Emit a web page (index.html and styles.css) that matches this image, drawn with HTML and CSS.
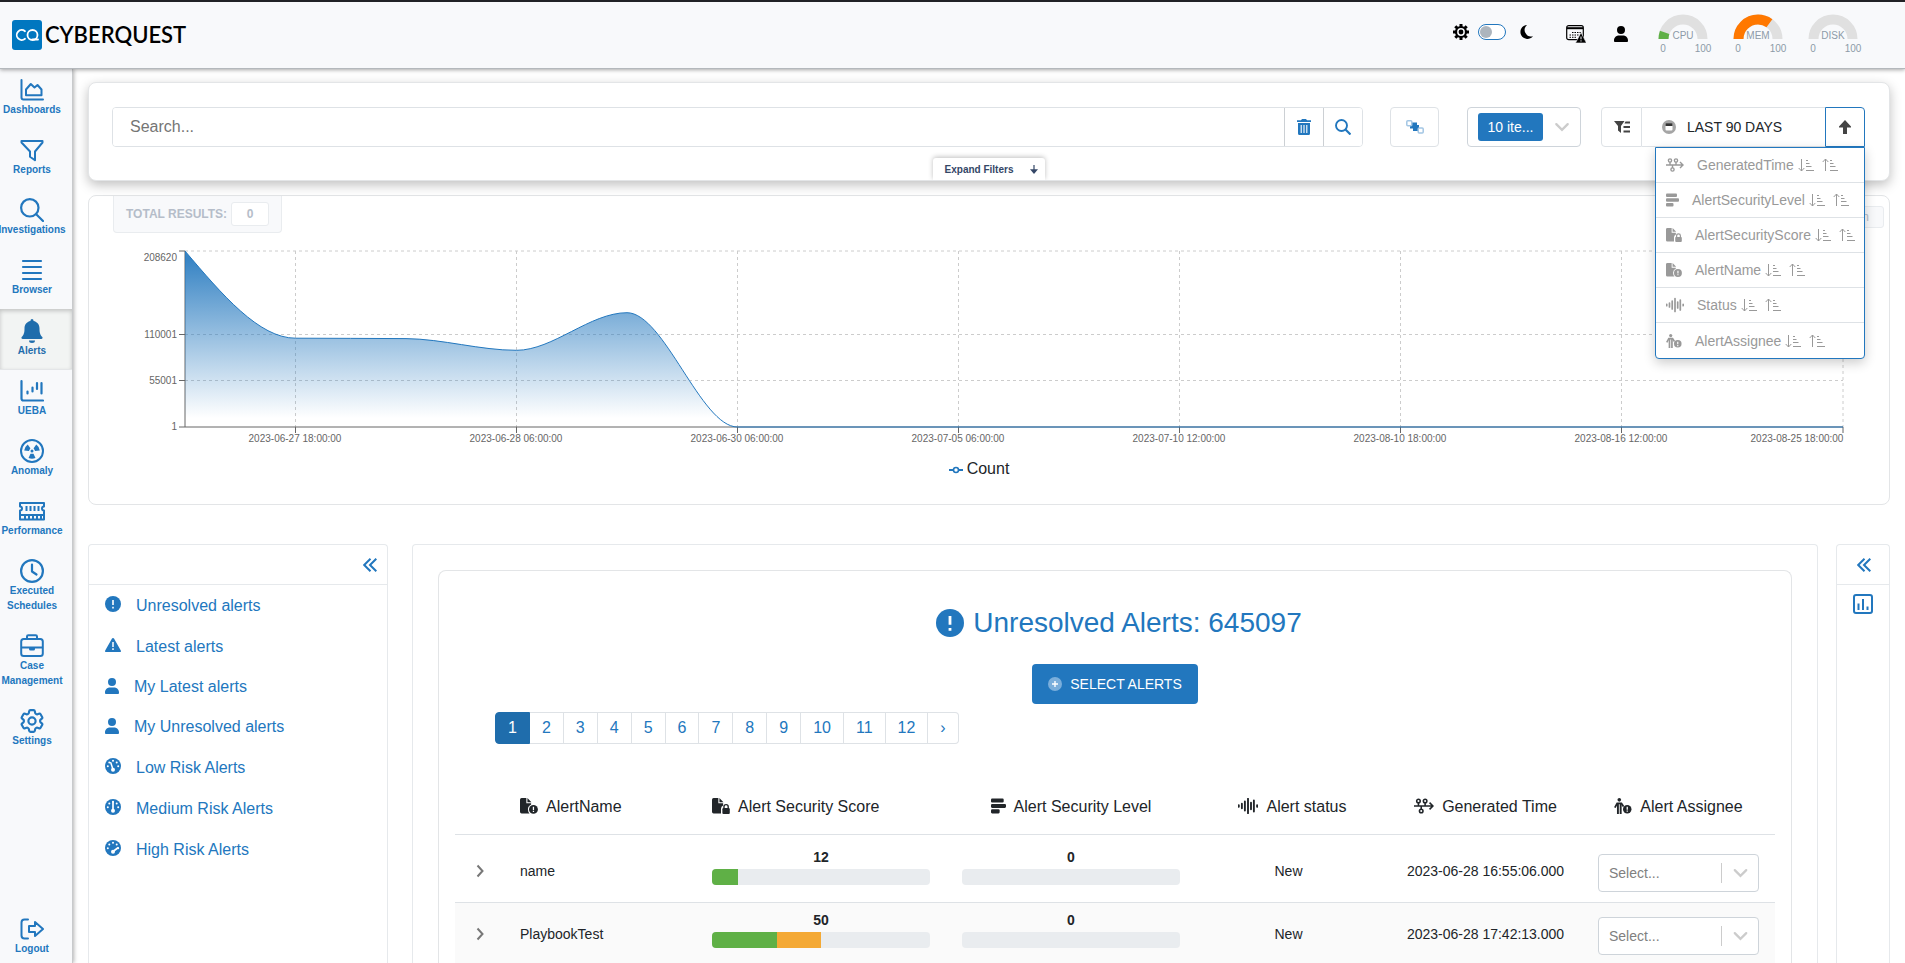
FILE: index.html
```html
<!DOCTYPE html>
<html lang="en">
<head>
    <meta charset="UTF-8">
    <meta name="viewport" content="width=device-width, initial-scale=1.0">
    <title>CYBERQUEST - Alerts</title>
    <link rel="stylesheet" href="styles.css">
</head>
<body>
    <!-- icon sprite -->
    <svg class="sprite" aria-hidden="true">
        <symbol id="i-dashboards" viewBox="0 0 24 24"><g fill="none" stroke="currentColor" stroke-width="2" stroke-linecap="round" stroke-linejoin="round"><path d="M1.5 2v17.500q0 2 2 2H23"/><path d="M6 11.500 10.800 6l3.700 3.500 3-2.500 4 4.500V17.300H6z"/></g></symbol>
        <symbol id="i-filter" viewBox="0 0 24 24"><path d="M1.500 3h21v1.500L15 13.500V22.300l-5-3.500v-5.300L1.500 4.500z" fill="none" stroke="currentColor" stroke-width="2" stroke-linejoin="round"/></symbol>
        <symbol id="i-search" viewBox="0 0 24 24"><g fill="none" stroke="currentColor" stroke-width="2.200" stroke-linecap="round"><circle cx="9.800" cy="9.800" r="8.700"/><path d="M16.200 16.200 23 23"/></g></symbol>
        <symbol id="i-find" viewBox="0 0 16 16"><g fill="none" stroke="currentColor" stroke-width="1.900"><circle cx="6.500" cy="6.500" r="5.500"/><path d="M10.500 10.500 15.500 15.500" stroke-width="2.200"/></g></symbol>
        <symbol id="i-list" viewBox="0 0 24 24"><path d="M3 3h18M3 9h18M3 15h18M3 21h18" stroke="currentColor" stroke-width="2.200" stroke-linecap="round"/></symbol>
        <symbol id="i-bell" viewBox="0 0 24 24"><path d="M10.500 1.500a1.500 1.500 0 0 1 3 0v.6c3.700.7 6 3.700 6 7.400 0 5 1 6.500 2.600 8.300 1 1.200.4 2.200-.9 2.200H2.800c-1.300 0-1.900-1-.9-2.200C3.500 16 4.500 14.500 4.500 9.500c0-3.700 2.300-6.700 6-7.400zM9 21.500h6a3 2.500 0 0 1-6 0z" fill="currentColor"/></symbol>
        <symbol id="i-ueba" viewBox="0 0 24 24"><path d="M1.500 2v17.500q0 2 2 2H23M7.500 12.500v2M12.500 8.500v4M17 4v6M21.500 4v10.500" fill="none" stroke="currentColor" stroke-width="2.200" stroke-linecap="round"/></symbol>
        <symbol id="i-anomaly" viewBox="0 0 24 24"><circle cx="12" cy="12" r="11" fill="none" stroke="currentColor" stroke-width="2"/><g fill="currentColor"><circle cx="12" cy="12" r="1.500"/><path id="blade" d="M10.500 14.700h3l2 4.300q-3.500 1.500-7 0z"/><use href="#blade" transform="rotate(120 12 12)"/><use href="#blade" transform="rotate(240 12 12)"/></g></symbol>
        <symbol id="i-memory" viewBox="0 0 28 24"><g fill="none" stroke="currentColor" stroke-width="2"><path d="M2 4h24v3.500a2 2 0 0 0 0 4V20.500H2v-9a2 2 0 0 0 0-4z" stroke-linejoin="round"/><path d="M2 16h24M8.500 7v5M12.500 7v5M16.500 7v5M20.500 7v5M7 17v3M11 17v3M15 17v3M19 17v3M23 17v3"/></g></symbol>
        <symbol id="i-clock" viewBox="0 0 24 24"><g fill="none" stroke="currentColor" stroke-width="2.200" stroke-linecap="round" stroke-linejoin="round"><circle cx="12" cy="12" r="10.900"/><path d="M12 5.500V12.500l4.500 3"/></g></symbol>
        <symbol id="i-case" viewBox="0 0 24 24"><g fill="none" stroke="currentColor" stroke-width="2" stroke-linejoin="round"><rect x="1.200" y="5" width="21.600" height="17" rx="2.500"/><path d="M7 5V2.500q0-1.300 1.300-1.300h7.400q1.300 0 1.300 1.300V5M1.200 13.500h21.600"/></g><path d="M9 13.500h6v1.500q0 1.500-1.500 1.500h-3Q9 16.500 9 15z" fill="currentColor"/></symbol>
        <symbol id="i-gear" viewBox="2 2 20 20"><g fill="none" stroke="currentColor" stroke-width="1.800" stroke-linejoin="round"><path d="M9.594 3.940c.09-.542.56-.94 1.110-.94h2.593c.55 0 1.020.398 1.110.94l.213 1.281c.063.374.313.686.645.870.074.040.147.083.220.127.325.196.720.257 1.075.124l1.217-.456a1.125 1.125 0 0 1 1.370.490l1.296 2.247a1.125 1.125 0 0 1-.26 1.431l-1.003.827c-.293.241-.438.613-.43.992a7.723 7.723 0 0 1 0 .255c-.008.378.137.750.430.991l1.004.827c.424.350.534.955.260 1.430l-1.298 2.247a1.125 1.125 0 0 1-1.369.491l-1.217-.456c-.355-.133-.75-.072-1.076.124a6.470 6.470 0 0 1-.22.128c-.331.183-.581.495-.644.869l-.213 1.281c-.09.543-.56.940-1.110.940h-2.594c-.55 0-1.019-.398-1.110-.94l-.213-1.281c-.062-.374-.312-.686-.644-.87a6.520 6.520 0 0 1-.22-.127c-.325-.196-.72-.257-1.076-.124l-1.217.456a1.125 1.125 0 0 1-1.369-.49l-1.297-2.247a1.125 1.125 0 0 1 .260-1.431l1.004-.827c.292-.24.437-.613.430-.991a6.932 6.932 0 0 1 0-.255c.007-.38-.138-.751-.43-.992l-1.004-.827a1.125 1.125 0 0 1-.26-1.430l1.297-2.247a1.125 1.125 0 0 1 1.370-.491l1.216.456c.356.133.751.072 1.076-.124.072-.044.146-.086.220-.128.332-.183.582-.495.644-.869z"/><circle cx="12" cy="12" r="3"/></g></symbol>
        <symbol id="i-logout" viewBox="0 0 24 24"><g fill="none" stroke="currentColor" stroke-width="2" stroke-linecap="round" stroke-linejoin="round"><path d="M8 2.500H4.500q-3 0-3 3v13q0 3 3 3H8"/><path d="M9 9h6V5l8 7-8 7v-4H9z"/></g></symbol>

        <symbol id="i-sun" viewBox="0 0 16 16"><g fill="none" stroke="currentColor"><circle cx="8" cy="8" r="5" stroke-width="2.200"/><path d="M8 0v3M8 13v3M0 8h3M13 8h3M2.300 2.300l2 2M11.700 11.700l2 2M13.700 2.300l-2 2M4.300 11.700l-2 2" stroke-width="3"/></g><circle cx="8" cy="8" r="2.400" fill="currentColor"/></symbol>
        <symbol id="i-moon" viewBox="0 0 16 16"><path d="M8 1a7 7 0 1 0 6 11.200A6.500 6.500 0 0 1 8 1z" fill="currentColor"/></symbol>
        <symbol id="i-schedule" viewBox="0 0 20 18"><rect x=".7" y=".7" width="16.600" height="14" rx="2" fill="none" stroke="currentColor" stroke-width="1.200"/><path d="M1 3.200h16" stroke="currentColor" stroke-width="2"/><path d="M6 7.500h9M3.500 10h9M3.500 12.300h7" stroke="currentColor" stroke-dasharray="1.500 1"/><path d="M15 7.500 20.500 18h-11z" fill="currentColor" stroke="#f8f9fb" stroke-width=".6"/><path d="M15 11.500v2.800M15 15.300v1.200" stroke="#f8f9fb"/></symbol>
        <symbol id="i-user" viewBox="0 0 14 16"><path d="M7 0a4 4 0 1 1 0 8 4 4 0 0 1 0-8zM5 9.500h4c3 0 5 2.200 5 5 0 1-.4 1.500-1.200 1.500H1.200C.4 16 0 15.500 0 14.500c0-2.800 2-5 5-5z" fill="currentColor"/></symbol>

        <symbol id="i-trash" viewBox="0 0 14 16"><path d="M0 1.200h4L5 0h4l1 1.200h4V3H0zM1 4h12v10.500q0 1.500-1.500 1.500h-9Q1 16 1 14.500z" fill="currentColor"/><path d="M4.200 6v8M7 6v8M9.800 6v8" stroke="#fff" stroke-width="1.100"/></symbol>
        <symbol id="i-nodes" viewBox="0 0 18 14"><path d="M4 2.500h7V5h2v6H7V8.500H4z" fill="#2277be"/><g fill="#fff" stroke="#a3c6e4" stroke-width="1.500"><rect x=".8" y=".8" width="5" height="5" rx="1"/><rect x="12.200" y="8" width="5" height="5" rx="1"/></g></symbol>
        <symbol id="i-chevron-down" viewBox="0 0 14 14"><path d="M2 4.500l5 5 5-5" fill="none" stroke="currentColor" stroke-width="2" stroke-linecap="round"/></symbol>
        <symbol id="i-filter-list" viewBox="0 0 16 12"><path d="M0 0h10.500L7 5v7L4 9.500V5zM11.500.5H16v2h-5.500zM9.500 5H16v2H9.500zM9.500 9.500H16v2H9.500z" fill="currentColor"/></symbol>
        <symbol id="i-period" viewBox="0 0 14 14"><circle cx="7" cy="7" r="7" fill="#a5a5a5"/><rect x="3.500" y="3.500" width="7" height="7" rx="1" fill="#fff"/><path d="M3.500 6V4q0-.8.8-.8h5.400q.8 0 .8.800V6z" fill="#333"/></symbol>
        <symbol id="i-arrow-up" viewBox="0 0 12 14"><path d="M6 0l6 6.500v1H8V14H4V7.500H0v-1z" fill="currentColor"/></symbol>
        <symbol id="i-arrow-down" viewBox="0 0 8 9"><path d="M4 0v5" stroke="currentColor" opacity=".6" stroke-width="2"/><path d="M0 4.300h8L4 9z" fill="currentColor"/></symbol>

        <symbol id="i-time" viewBox="0 0 18 14"><g fill="none" stroke="currentColor" stroke-width="1.400"><circle cx="4" cy="2.500" r="1.600"/><circle cx="10" cy="2.500" r="1.600"/><circle cx="6.500" cy="11.500" r="1.600"/><path d="M0 7h17M14 4l3 3-3 3M4 4v3M10 4v3M6.500 7v3"/></g></symbol>
        <symbol id="i-level" viewBox="0 0 13 13"><g fill="currentColor"><rect width="11" height="3.500" rx="1"/><rect y="4.700" width="13" height="3.500" rx="1"/><rect y="9.400" width="7.500" height="3.500" rx="1"/></g></symbol>
        <symbol id="i-file-lock" viewBox="0 0 17 15"><path d="M1.500 0H6v5h4.500v2Q8.500 8 8.500 10v4.500h-7Q0 14.500 0 13V1.500Q0 0 1.500 0zM7 0l3.800 4H7z" fill="currentColor"/><rect x="9.800" y="9.500" width="7" height="5.500" rx="1" fill="currentColor"/><path d="M11.300 10V8.200a2 2 0 0 1 4 0V10" fill="none" stroke="currentColor" stroke-width="1.300"/></symbol>
        <symbol id="i-file-alert" viewBox="0 0 17 15"><path d="M1.500 0H6v5h4.500v1Q7.500 7.500 7.500 10.500q0 2.500 1.500 4H1.500Q0 14.500 0 13V1.500Q0 0 1.500 0zM7 0l3.800 4H7z" fill="currentColor"/><circle cx="12.700" cy="10.700" r="4.200" fill="currentColor"/><path d="M12.700 8.200v3M12.700 12v1.200" stroke="#fff" stroke-width="1.200"/></symbol>
        <symbol id="i-wave" viewBox="0 0 18 14"><path d="M.7 6.300v1.400M3.500 5v4M6.200 3v8M9 .5v13M11.700 4v6M14.300 2v10M17.200 6.300v1.400" stroke="currentColor" stroke-width="1.700" stroke-linecap="round"/></symbol>
        <symbol id="i-assignee" viewBox="0 0 17 15"><circle cx="5" cy="1.700" r="1.700" fill="currentColor"/><path d="M.8 9 3 5h4l2 3" fill="none" stroke="currentColor" stroke-width="1.700"/><path d="M3.700 5v10M6.300 5v10" stroke="currentColor" stroke-width="1.800"/><circle cx="12.500" cy="10.500" r="4" fill="currentColor"/><path d="M12.500 8.200v2.800M12.500 11.800V13" stroke="#fff" stroke-width="1.200"/></symbol>
        <symbol id="i-sort-down" viewBox="0 0 16 14"><g fill="none" stroke="currentColor"><path d="M3.500 1v12M.7 10l2.800 3 2.800-3"/><path d="M8 2.500h2M8 5.500h3.500M8 8.500h5.500M8 12.500h8"/></g></symbol>
        <symbol id="i-sort-up" viewBox="0 0 16 14"><g fill="none" stroke="currentColor"><path d="M3.500 13V1M.7 4l2.800-3 2.800 3"/><path d="M8 2.500h2M8 5.500h3.500M8 8.500h5.500M8 12.500h8"/></g></symbol>

        <symbol id="i-double-left" viewBox="0 0 14 14"><path d="M7.500.7 1.200 7l6.300 6.300M13.300.7 7 7l6.300 6.300" fill="none" stroke="currentColor" stroke-width="2"/></symbol>
        <symbol id="i-chart-box" viewBox="0 0 20 20"><g fill="none" stroke="currentColor"><rect x="1" y="1" width="18" height="18" rx="2" stroke-width="2"/><path d="M5.500 9.500v6.500M10 5v11M14.500 12.500V16" stroke-width="2"/></g></symbol>
        <symbol id="i-alert" viewBox="0 0 16 16"><circle cx="8" cy="8" r="8" fill="currentColor"/><path d="M8 4v5M8 10.800v1.600" stroke="#fff" stroke-width="1.600"/></symbol>
        <symbol id="i-warning" viewBox="0 0 16 14"><path d="M8 0q.7 0 1 .6l6.800 11.800q.6 1.600-1 1.600H1.200q-1.600 0-1-1.600L7 .6Q7.300 0 8 0z" fill="currentColor"/><path d="M8 4v5M8 10.300v1.600" stroke="#fff" stroke-width="1.500"/></symbol>
        <symbol id="i-gauge-base" viewBox="0 0 16 16"><circle cx="8" cy="8" r="8" fill="currentColor"/><g fill="#fff"><circle cx="2.800" cy="8.300" r="1"/><circle cx="4.300" cy="4.600" r="1"/><circle cx="8" cy="2.800" r="1"/><circle cx="11.700" cy="4.600" r="1"/><circle cx="13.200" cy="8.300" r="1"/><circle cx="8" cy="11.800" r="2"/></g></symbol>
        <symbol id="i-low" viewBox="0 0 16 16"><use href="#i-gauge-base"/><path d="M8 11.500 5.800 4.700" stroke="#fff" stroke-width="1.500" stroke-linecap="round"/></symbol>
        <symbol id="i-medium" viewBox="0 0 16 16"><use href="#i-gauge-base"/><path d="M8 11.500V3" stroke="#fff" stroke-width="1.700" stroke-linecap="round"/></symbol>
        <symbol id="i-high" viewBox="0 0 16 16"><use href="#i-gauge-base"/><path d="M8 11.500 13 7.700" stroke="#fff" stroke-width="1.700" stroke-linecap="round"/></symbol>
        <symbol id="i-plus" viewBox="0 0 14 14"><circle cx="7" cy="7" r="7" fill="#7aaedb"/><path d="M4 7h6M7 4v6" stroke="#fff" stroke-width="1.400"/></symbol>
        <symbol id="i-chevron-right" viewBox="0 0 8 14"><path d="M1.500 1.500 6.500 7l-5 5.500" fill="none" stroke="currentColor" stroke-width="2"/></symbol>
    </svg>

    <header class="topbar">
        <a class="brand" href="#">
            <svg class="brand-logo" viewBox="0 0 30 30"><rect width="30" height="30" rx="3" fill="#0077c0"/><g fill="none" stroke="#fff" stroke-width="1.800" stroke-linecap="round"><path d="M13 11.200a5 5 0 1 0 0 7.600"/><circle cx="20.500" cy="15" r="5"/><path d="M20.500 19.500H26"/></g></svg>
            <span class="brand-name">CYBERQUEST</span>
        </a>
        <div class="theme">
            <svg class="icon16"><use href="#i-sun"/></svg>
            <input type="checkbox" class="switch" aria-label="Dark theme">
            <svg class="icon16"><use href="#i-moon"/></svg>
        </div>
        <button class="plain" aria-label="Schedules"><svg class="icon20"><use href="#i-schedule"/></svg></button>
        <button class="plain user" aria-label="Account"><svg class="icon16"><use href="#i-user"/></svg></button>
        <div class="gauges">
            <svg class="gauge" viewBox="0 0 56 42">
                <path class="track" d="M5.500 25a19.500 19.500 0 0 1 39 0"/>
                <path class="level cpu" pathLength="100" d="M5.500 25a19.500 19.500 0 0 1 39 0"/>
                <text x="25" y="25">CPU</text><text x="5" y="38">0</text><text x="45" y="38">100</text>
            </svg>
            <svg class="gauge" viewBox="0 0 56 42">
                <path class="track" d="M5.500 25a19.500 19.500 0 0 1 39 0"/>
                <path class="level mem" pathLength="100" d="M5.500 25a19.500 19.500 0 0 1 39 0"/>
                <text x="25" y="25">MEM</text><text x="5" y="38">0</text><text x="45" y="38">100</text>
            </svg>
            <svg class="gauge" viewBox="0 0 56 42">
                <path class="track" d="M5.500 25a19.500 19.500 0 0 1 39 0"/>
                <text x="25" y="25">DISK</text><text x="5" y="38">0</text><text x="45" y="38">100</text>
            </svg>
        </div>
    </header>

    <div class="layout">
        <nav class="sidebar">
            <a href="#"><svg><use href="#i-dashboards"/></svg><span>Dashboards</span></a>
            <a href="#"><svg><use href="#i-filter"/></svg><span>Reports</span></a>
            <a href="#"><svg><use href="#i-search"/></svg><span>Investigations</span></a>
            <a href="#"><svg><use href="#i-list"/></svg><span>Browser</span></a>
            <a href="#" class="active"><svg><use href="#i-bell"/></svg><span>Alerts</span></a>
            <a href="#"><svg><use href="#i-ueba"/></svg><span>UEBA</span></a>
            <a href="#"><svg><use href="#i-anomaly"/></svg><span>Anomaly</span></a>
            <a href="#"><svg class="wide"><use href="#i-memory"/></svg><span>Performance</span></a>
            <a href="#"><svg><use href="#i-clock"/></svg><span>Executed<br>Schedules</span></a>
            <a href="#"><svg><use href="#i-case"/></svg><span>Case<br>Management</span></a>
            <a href="#"><svg><use href="#i-gear"/></svg><span>Settings</span></a>
            <a href="#" class="logout"><svg><use href="#i-logout"/></svg><span>Logout</span></a>
        </nav>

        <main>
            <section class="search-card">
                <div class="search-row">
                    <form class="search-group">
                        <input type="text" placeholder="Search..." aria-label="Search">
                        <button type="button" aria-label="Clear"><svg class="icon16"><use href="#i-trash"/></svg></button>
                        <button type="button" aria-label="Search"><svg class="icon16"><use href="#i-find"/></svg></button>
                    </form>
                    <button class="box nodes" aria-label="Group"><svg class="icon18"><use href="#i-nodes"/></svg></button>
                    <button class="box items"><span class="chip">10 ite...</span><svg class="icon16"><use href="#i-chevron-down"/></svg></button>
                    <div class="period-group">
                        <button class="filters" aria-label="Filters"><svg class="icon16"><use href="#i-filter-list"/></svg></button>
                        <button class="period"><svg class="icon14"><use href="#i-period"/></svg>LAST 90 DAYS</button>
                        <button class="sort" aria-label="Sort"><svg class="icon14"><use href="#i-arrow-up"/></svg></button>
                        <ul class="sort-menu">
                            <li><svg class="w18"><use href="#i-time"/></svg><span>GeneratedTime</span><button aria-label="Descending"><svg><use href="#i-sort-down"/></svg></button><button aria-label="Ascending"><svg><use href="#i-sort-up"/></svg></button></li>
                            <li><svg class="w13"><use href="#i-level"/></svg><span>AlertSecurityLevel</span><button aria-label="Descending"><svg><use href="#i-sort-down"/></svg></button><button aria-label="Ascending"><svg><use href="#i-sort-up"/></svg></button></li>
                            <li><svg class="w16"><use href="#i-file-lock"/></svg><span>AlertSecurityScore</span><button aria-label="Descending"><svg><use href="#i-sort-down"/></svg></button><button aria-label="Ascending"><svg><use href="#i-sort-up"/></svg></button></li>
                            <li><svg class="w16"><use href="#i-file-alert"/></svg><span>AlertName</span><button aria-label="Descending"><svg><use href="#i-sort-down"/></svg></button><button aria-label="Ascending"><svg><use href="#i-sort-up"/></svg></button></li>
                            <li><svg class="w18"><use href="#i-wave"/></svg><span>Status</span><button aria-label="Descending"><svg><use href="#i-sort-down"/></svg></button><button aria-label="Ascending"><svg><use href="#i-sort-up"/></svg></button></li>
                            <li><svg class="w16"><use href="#i-assignee"/></svg><span>AlertAssignee</span><button aria-label="Descending"><svg><use href="#i-sort-down"/></svg></button><button aria-label="Ascending"><svg><use href="#i-sort-up"/></svg></button></li>
                        </ul>
                    </div>
                </div>
                <button class="expand">Expand Filters<svg><use href="#i-arrow-down"/></svg></button>
            </section>

            <section class="chart-card">
                <div class="chart-head">
                    <div class="total"><label for="total">TOTAL RESULTS:</label><input type="text" id="total" value="0" readonly></div>
                    <button class="tag">n</button>
                </div>
                <svg class="chart" viewBox="0 0 1800 218">
                    <defs>
                        <linearGradient id="fade" x1="0" y1="0" x2="0" y2="1">
                            <stop offset="5%" stop-color="#2277be" stop-opacity=".9"/>
                            <stop offset="95%" stop-color="#2277be" stop-opacity="0"/>
                        </linearGradient>
                    </defs>
                    <path class="grid" d="M96 18H1754M96 101.500H1754M96 147.500H1754M206.500 18V194M427.500 18V194M648.500 18V194M869.500 18V194M1090.500 18V194M1311.500 18V194M1532.500 18V194M1754 18V194"/>
                    <path class="axis" d="M90 18h6v176H90M90 101.500h6M90 147.500h6M96 194H1754v6M206.500 194v6M427.500 194v6M648.500 194v6M869.500 194v6M1090.500 194v6M1311.500 194v6M1532.500 194v6"/>
                    <path fill="url(#fade)" d="M96 18C133 61.500 170 105.200 206.500 105.200C243 105.500 280 105.200 317 105.600C354 106 391 117.300 427.500 117.300C464 117.300 501 79.700 538 79.700C575 79.700 612 194 648.500 194H96z"/>
                    <path class="line" d="M96 18C133 61.500 170 105.200 206.500 105.200C243 105.500 280 105.200 317 105.600C354 106 391 117.300 427.500 117.300C464 117.300 501 79.700 538 79.700C575 79.700 612 194 648.500 194H1754"/>
                    <g class="ylabels">
                        <text x="88" y="28">208620</text><text x="88" y="105">110001</text><text x="88" y="151">55001</text><text x="88" y="197">1</text>
                    </g>
                    <g class="xlabels">
                        <text x="206" y="209">2023-06-27 18:00:00</text>
                        <text x="427" y="209">2023-06-28 06:00:00</text>
                        <text x="648" y="209">2023-06-30 06:00:00</text>
                        <text x="869" y="209">2023-07-05 06:00:00</text>
                        <text x="1090" y="209">2023-07-10 12:00:00</text>
                        <text x="1311" y="209">2023-08-10 18:00:00</text>
                        <text x="1532" y="209">2023-08-16 12:00:00</text>
                        <text x="1708" y="209">2023-08-25 18:00:00</text>
                    </g>
                </svg>
                <div class="legend"><svg viewBox="0 0 14 14"><path d="M0 8h4M10 8h4" stroke="#2277be" stroke-width="2"/><circle cx="7" cy="8" r="2.500" fill="#fff" stroke="#2277be" stroke-width="1.600"/></svg>Count</div>
            </section>

            <div class="columns">
                <aside class="panel lists">
                    <div class="panel-head"><button class="plain" aria-label="Collapse"><svg class="icon14"><use href="#i-double-left"/></svg></button></div>
                    <a href="#"><svg class="w16"><use href="#i-alert"/></svg>Unresolved alerts</a>
                    <a href="#"><svg class="w16"><use href="#i-warning"/></svg>Latest alerts</a>
                    <a href="#" class="mine"><svg class="w14"><use href="#i-user"/></svg>My Latest alerts</a>
                    <a href="#" class="mine"><svg class="w14"><use href="#i-user"/></svg>My Unresolved alerts</a>
                    <a href="#"><svg class="w16"><use href="#i-low"/></svg>Low Risk Alerts</a>
                    <a href="#"><svg class="w16"><use href="#i-medium"/></svg>Medium Risk Alerts</a>
                    <a href="#"><svg class="w16"><use href="#i-high"/></svg>High Risk Alerts</a>
                </aside>

                <section class="panel alerts">
                    <div class="alerts-card">
                        <h1><svg><use href="#i-alert"/></svg>Unresolved Alerts: 645097</h1>
                        <button class="select-alerts"><svg class="icon14"><use href="#i-plus"/></svg>SELECT ALERTS</button>
                        <ul class="pagination">
                            <li><a href="#" class="current">1</a></li>
                            <li><a href="#">2</a></li>
                            <li><a href="#">3</a></li>
                            <li><a href="#">4</a></li>
                            <li><a href="#">5</a></li>
                            <li><a href="#">6</a></li>
                            <li><a href="#">7</a></li>
                            <li><a href="#">8</a></li>
                            <li><a href="#">9</a></li>
                            <li><a href="#">10</a></li>
                            <li><a href="#">11</a></li>
                            <li><a href="#">12</a></li>
                            <li><a href="#">›</a></li>
                        </ul>
                        <table>
                            <colgroup><col class="c-open"><col class="c-name"><col class="c-bar"><col class="c-bar"><col class="c-info"><col class="c-info"><col class="c-info"></colgroup>
                            <thead>
                                <tr>
                                    <th></th>
                                    <th class="left"><svg class="w18"><use href="#i-file-alert"/></svg>AlertName</th>
                                    <th class="left"><svg class="w18"><use href="#i-file-lock"/></svg>Alert Security Score</th>
                                    <th><svg class="w15"><use href="#i-level"/></svg>Alert Security Level</th>
                                    <th><svg class="w20"><use href="#i-wave"/></svg>Alert status</th>
                                    <th><svg class="w20"><use href="#i-time"/></svg>Generated Time</th>
                                    <th><svg class="w18"><use href="#i-assignee"/></svg>Alert Assignee</th>
                                </tr>
                            </thead>
                            <tbody>
                                <tr>
                                    <td><button class="plain open" aria-label="Open row"><svg><use href="#i-chevron-right"/></svg></button></td>
                                    <td class="left">name</td>
                                    <td><b>12</b><div class="bar"><i class="green" style="width:12%"></i></div></td>
                                    <td><b>0</b><div class="bar"></div></td>
                                    <td class="status">New</td>
                                    <td>2023-06-28 16:55:06.000</td>
                                    <td><div class="pick"><select aria-label="Alert assignee"><option>Select...</option></select><svg><use href="#i-chevron-down"/></svg></div></td>
                                </tr>
                                <tr>
                                    <td><button class="plain open" aria-label="Open row"><svg><use href="#i-chevron-right"/></svg></button></td>
                                    <td class="left">PlaybookTest</td>
                                    <td><b>50</b><div class="bar"><i class="green" style="width:30%"></i><i class="orange" style="width:20%"></i></div></td>
                                    <td><b>0</b><div class="bar"></div></td>
                                    <td class="status">New</td>
                                    <td>2023-06-28 17:42:13.000</td>
                                    <td><div class="pick"><select aria-label="Alert assignee"><option>Select...</option></select><svg><use href="#i-chevron-down"/></svg></div></td>
                                </tr>
                            </tbody>
                        </table>
                    </div>
                </section>

                <aside class="panel tools">
                    <div class="panel-head"><button class="plain" aria-label="Expand"><svg class="icon14"><use href="#i-double-left"/></svg></button></div>
                    <button class="plain tool" aria-label="Charts"><svg class="icon20"><use href="#i-chart-box"/></svg></button>
                </aside>
            </div>
        </main>
    </div>
</body>
</html>
```

FILE: styles.css
```css
* {
  box-sizing: border-box;
}

body {
  margin: 0;
  height: 100vh;
  display: flex;
  flex-direction: column;
  overflow: hidden;
  background: #fff;
  color: #212529;
  font-family: "Liberation Sans", Arial, sans-serif;
  font-size: 14px;
}

a {
  color: #2277be;
  text-decoration: none;
}

button, input, select {
  font-family: inherit;
  font-size: 14px;
  color: inherit;
}

button {
  display: flex;
  align-items: center;
  justify-content: center;
  padding: 0;
  background: #fff;
  border: 1px solid #dee2e6;
  cursor: pointer;
}

ul {
  list-style: none;
  margin: 0;
  padding: 0;
}

svg {
  display: block;
  flex: none;
}

.sprite {
  display: none;
}

.plain {
  border: 0;
  background: none;
}

.icon14 { width: 14px; height: 14px; }
.icon16 { width: 16px; height: 16px; }
.icon18 { width: 18px; height: 16px; }
.icon20 { width: 20px; height: 20px; }
.w13 { width: 13px; height: 14px; }
.w14 { width: 14px; height: 16px; }
.w15 { width: 15px; height: 16px; }
.w16 { width: 16px; height: 16px; }
.w18 { width: 18px; height: 16px; }
.w20 { width: 20px; height: 16px; }

/* Top bar */
.topbar {
  flex: none;
  display: flex;
  align-items: flex-start;
  height: 69px;
  padding: 12px 41px 0 12px;
  background: #f8f9fb;
  border-top: 2px solid #212226;
  border-bottom: 1px solid #b4b8bc;
  box-shadow: 0 1px 4px rgba(0, 0, 0, 0.35);
  z-index: 3;
}

.brand {
  display: flex;
  align-items: center;
  gap: 3px;
  margin-right: auto;
  padding-top: 6px;
  color: #000;
}

.brand-logo {
  width: 30px;
  height: 30px;
}

.brand-name {
  font-family: Lato, sans-serif;
  font-size: 22px;
  font-weight: 600;
  line-height: 30px;
}

.theme {
  display: flex;
  align-items: center;
  gap: 9px;
  padding-top: 10px;
  color: #000;
}

.switch {
  appearance: none;
  display: flex;
  width: 28px;
  height: 16px;
  margin: 0 4px 0 0;
  padding: 1px;
  border: 1px solid #2277be;
  border-radius: 8px;
  background: #fff;
}

.switch::before {
  content: "";
  width: 12px;
  height: 12px;
  border-radius: 50%;
  background: #adb5bd;
}

.topbar .plain {
  height: 40px;
  margin-left: 31px;
  color: #000;
}

.topbar .user {
  margin-left: 27px;
}

.gauges {
  display: flex;
  gap: 19px;
  margin-left: 29px;
}

.gauge {
  width: 56px;
  height: 42px;
  overflow: visible;
}

.gauge path {
  fill: none;
  stroke-width: 10;
}

.gauge text {
  fill: #8d9ba8;
  font-size: 10px;
  text-anchor: middle;
}

.track { stroke: #e0e0e0; }
.cpu { stroke: #5fb046; stroke-dasharray: 11 200; }
.mem { stroke: #ff7800; stroke-dasharray: 70 200; }

/* Sidebar */
.layout {
  flex: 1;
  display: flex;
  min-height: 0;
}

.sidebar {
  flex: none;
  display: flex;
  flex-direction: column;
  width: 73px;
  background: #f8f9fb;
  border-right: 1px solid #c8cacc;
  box-shadow: 1px 0 4px rgba(0, 0, 0, 0.3);
  z-index: 2;
}

.sidebar a {
  display: flex;
  flex-direction: column;
  align-items: center;
  padding: 9px 8px 12px 0;
  font-size: 10px;
  font-weight: bold;
  line-height: 15px;
  text-align: center;
}

.sidebar svg {
  width: 24px;
  height: 24px;
}

.sidebar .wide {
  width: 28px;
}

.sidebar .active {
  padding: 10px 8px 11px 0;
  color: #1f6dac;
  background: #f2f4f3;
  border-bottom: 1px solid #e4e6e8;
  box-shadow: inset 0 2px 4px rgba(0, 0, 0, 0.2);
}

.sidebar .logout {
  margin-top: auto;
  padding-bottom: 7px;
}

main {
  flex: 1;
  display: flex;
  flex-direction: column;
  min-width: 0;
  padding: 13px 15px 0 15px;
}

/* Search */
.search-card {
  flex: none;
  display: flex;
  flex-direction: column;
  align-items: center;
  padding: 24px 24px 0 23px;
  border: 1px solid #e3e5e7;
  border-radius: 8px;
  background: #fff;
  box-shadow: 0 4px 12px rgba(0, 0, 0, 0.25);
  z-index: 1;
}

.search-row {
  align-self: stretch;
  display: flex;
  height: 40px;
}

.search-group {
  flex: 1;
  display: flex;
  border: 1px solid #dee2e6;
  border-radius: 4px;
  overflow: hidden;
}

.search-group input {
  flex: 1;
  min-width: 0;
  padding: 0 17px;
  border: 0;
  font-size: 16px;
}

.search-group button {
  width: 39px;
  border-width: 0 0 0 1px;
  border-color: #ccd0d4;
  color: #2277be;
}

.box {
  border-radius: 4px;
}

.nodes {
  width: 49px;
  margin-left: 27px;
}

.items {
  width: 114px;
  margin-left: 28px;
  gap: 11px;
  border-color: #ced4da;
  color: #ccc;
}

.chip {
  width: 65px;
  height: 28px;
  border-radius: 3px;
  background: #2277be;
  color: #fff;
  line-height: 28px;
}

.period-group {
  position: relative;
  display: flex;
  width: 264px;
  margin-left: 20px;
}

.filters {
  width: 41px;
  border-radius: 4px 0 0 4px;
  color: #444;
}

.period {
  flex: 1;
  justify-content: flex-start;
  gap: 11px;
  padding-left: 20px;
  border-width: 1px 0;
}

.sort {
  width: 40px;
  border-color: #2277be;
  border-radius: 0 4px 0 0;
  color: #444;
}

.sort-menu {
  position: absolute;
  top: 40px;
  right: 0;
  width: 210px;
  border: 1px solid #2277be;
  border-radius: 0 0 4px 4px;
  background: #fff;
  box-shadow: 0 4px 12px rgba(0, 0, 0, 0.2);
  color: #999;
}

.sort-menu li {
  display: flex;
  align-items: center;
  height: 35px;
  padding-left: 10px;
  border-bottom: 1px solid #dee2e6;
}

.sort-menu li:last-child {
  border-bottom: 0;
}

.sort-menu span {
  margin-left: 13px;
}

.sort-menu button {
  margin: 0 4px;
  border: 0;
  background: none;
}

.sort-menu button svg {
  width: 16px;
  height: 14px;
}

.expand {
  gap: 17px;
  width: 112px;
  height: 22px;
  margin-top: 11px;
  padding-left: 6px;
  border: 0;
  border-radius: 3px 3px 0 0;
  box-shadow: 0 -1px 5px rgba(0, 0, 0, 0.25);
  clip-path: inset(-8px -8px 0 -8px);
  color: #344767;
  font-size: 10px;
  font-weight: bold;
}

.expand svg {
  width: 8px;
  height: 9px;
}

/* Chart */
.chart-card {
  flex: none;
  margin-top: 14px;
  padding-bottom: 23px;
  border: 1px solid #e3e5e7;
  border-radius: 8px;
}

.chart-head {
  display: flex;
  justify-content: space-between;
  height: 37px;
  padding: 0 5px 0 24px;
}

.total {
  display: flex;
  align-items: center;
  gap: 4px;
  padding: 0 12px;
  border: 1px solid #e9ecef;
  border-top: 0;
  border-radius: 0 0 4px 4px;
  background: #f8f9fb;
  color: #b5bdc9;
  font-size: 12px;
  font-weight: bold;
}

.total input {
  width: 38px;
  height: 24px;
  border: 1px solid #e9ecef;
  border-radius: 3px;
  background: #fff;
  font-size: 12px;
  font-weight: bold;
  text-align: center;
}

.tag {
  justify-content: flex-end;
  width: 60px;
  height: 22px;
  margin-top: 10px;
  padding-right: 14px;
  border-color: #e9ecef;
  border-radius: 3px;
  background: #f8f9fb;
  color: #b5bdc9;
  font-size: 12px;
}

.chart {
  width: 100%;
}

.chart text {
  fill: #666;
  font-size: 10px;
}

.chart .ylabels { text-anchor: end; }
.chart .xlabels { text-anchor: middle; }

.grid {
  fill: none;
  stroke: #ccc;
  stroke-dasharray: 3 3;
}

.axis {
  fill: none;
  stroke: #666;
}

.line {
  fill: none;
  stroke: #2277be;
}

.legend {
  display: flex;
  align-items: center;
  justify-content: center;
  gap: 4px;
  padding-top: 6px;
  padding-right: 20px;
  font-size: 16px;
  line-height: 24px;
}

.legend svg {
  width: 14px;
  height: 14px;
}

/* Lower panels */
.columns {
  flex: 1;
  display: flex;
  min-height: 0;
  margin-top: 39px;
}

.panel {
  border: 1px solid #e6e9ec;
  border-bottom: 0;
  border-radius: 4px 4px 0 0;
}

.panel-head {
  display: flex;
  align-items: center;
  justify-content: flex-end;
  height: 40px;
  padding-right: 10px;
  border-bottom: 1px solid #e6e9ec;
}

.panel-head button {
  color: #2277be;
}

.lists {
  width: 300px;
}

.lists a {
  display: flex;
  align-items: center;
  gap: 15px;
  height: 41px;
  padding-left: 16px;
  font-size: 16px;
}

.lists .mine {
  height: 40px;
}

.lists a svg {
  margin-bottom: 3px;
}

.alerts {
  flex: 1;
  min-width: 0;
  margin: 0 18px 0 24px;
  padding: 25px 25px 0 25px;
}

.alerts-card {
  padding: 35px 16px 0 16px;
  border: 1px solid #e3e5e7;
  border-bottom: 0;
  border-radius: 8px 8px 0 0;
}

h1 {
  display: flex;
  align-items: center;
  justify-content: center;
  gap: 9px;
  margin: 0 0 24px 0;
  padding-left: 8px;
  color: #2277be;
  font-size: 28px;
  font-weight: normal;
  line-height: 34px;
}

h1 svg {
  width: 28px;
  height: 28px;
}

.select-alerts {
  gap: 8px;
  height: 40px;
  margin: 0 auto;
  padding: 0 16px;
  border: 0;
  border-radius: 4px;
  background: #2277be;
  color: #fff;
}

.pagination {
  display: flex;
  margin: 8px 0 36px 0;
  padding-left: 40px;
}

.pagination a {
  display: block;
  height: 32px;
  padding: 0 12px;
  border: 1px solid #dee2e6;
  border-left: 0;
  font-size: 16px;
  line-height: 30px;
}

.pagination .current {
  border: 1px solid #1f6dac;
  border-radius: 4px 0 0 4px;
  background: #1f6dac;
  color: #fff;
}

.pagination li:last-child a {
  border-radius: 0 4px 4px 0;
}

table {
  width: 100%;
  table-layout: fixed;
  border-collapse: collapse;
}

.c-open { width: 49px; }
.c-name { width: 192px; }
.c-bar { width: 250px; }
.c-info { width: 193px; }

th {
  height: 54px;
  padding: 0;
  font-size: 16px;
  font-weight: normal;
  white-space: nowrap;
}

th svg {
  display: inline-block;
  margin-right: 8px;
  vertical-align: -2px;
}

td {
  height: 63px;
  padding: 0 16px;
  border-top: 1px solid #dee2e6;
  text-align: center;
  white-space: nowrap;
}

tbody tr:first-child td {
  height: 68px;
  padding-top: 5px;
}

tbody tr:nth-child(2) {
  background: #fafafa;
}

.left {
  padding-left: 16px;
  text-align: left;
}

td.status {
  padding-right: 24px;
}

td b {
  display: block;
  line-height: 16px;
}

.bar {
  display: flex;
  height: 16px;
  margin: 4px 0 8px 0;
  border-radius: 4px;
  background: #e9ecef;
  overflow: hidden;
}

.green { background: #5fb046; }
.orange { background: #f4a935; }

.open {
  margin: 0 auto;
  color: #777;
}

.open svg {
  width: 8px;
  height: 14px;
}

.pick {
  display: grid;
  align-items: center;
  padding-top: 5px;
}

.pick select {
  grid-area: 1 / 1;
  appearance: none;
  width: 100%;
  height: 38px;
  padding: 0 10px;
  border: 1px solid #ced4da;
  border-radius: 4px;
  background: #fff;
  color: #808080;
}

.pick svg {
  grid-area: 1 / 1;
  justify-self: end;
  width: 38px;
  height: 20px;
  padding: 2px 0;
  border-left: 1px solid #ccc;
  color: #ccc;
  pointer-events: none;
}

.tools {
  width: 54px;
}

.tools .panel-head {
  padding-right: 18px;
}

.tool {
  margin: 9px 0 0 16px;
  color: #2277be;
}
```
